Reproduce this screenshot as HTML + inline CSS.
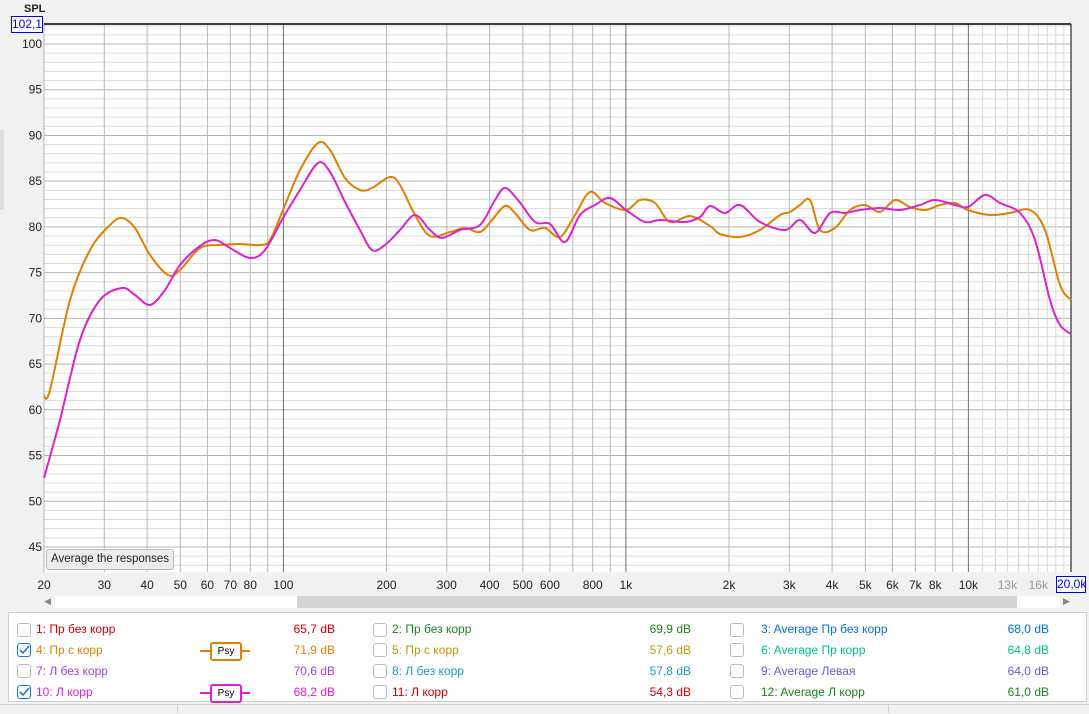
<!DOCTYPE html>
<html><head><meta charset="utf-8"><style>
body{margin:0;width:1089px;height:713px;background:#f2f2f2;font-family:"Liberation Sans",sans-serif;position:relative;overflow:hidden}
.ab{position:absolute;white-space:nowrap}
.leg{position:absolute;left:8px;top:612px;width:1079px;height:90px;background:#fff;border:1px solid #cfcfcf;box-sizing:border-box}
.cb{position:absolute;width:12px;height:12px;border:1px solid #bbb;border-radius:3px;background:#fff}
.cb.on{border-color:#1a73e8}
.t{position:absolute;font-size:12px;white-space:nowrap}
.v{position:absolute;font-size:12px;text-align:right;width:80px}
</style></head><body>
<div class="ab" style="left:24px;top:3px;font-size:11px;font-weight:bold;color:#222;height:9px;overflow:hidden">SPL</div>
<div style="position:absolute;left:0;top:130px;width:4px;height:80px;background:#ddd"></div>
<svg id="g" width="1089" height="612" style="position:absolute;left:0;top:0"></svg>
<div class="ab" style="left:11px;top:16px;width:30px;height:15px;border:1px solid #00f;background:#fff;color:#00f;font-size:12px;text-align:center;line-height:15px">102,1</div>
<div class="ab" style="left:46px;top:549px;height:19px;padding:0 4px;border:1px solid #bbb;border-radius:3px;background:#ececec;font-size:11.5px;line-height:19px;color:#222">Average the responses</div>
<div class="ab" style="left:1056px;top:576px;width:28px;height:15px;border:1px solid #00f;background:#fff;color:#00f;font-size:12px;text-align:center;line-height:15px">20,0k</div>
<div style="position:absolute;left:55px;top:596px;width:1005px;height:12px;background:#fff"></div>
<div style="position:absolute;left:297px;top:596px;width:720px;height:12px;background:#d4d4d4"></div>
<div class="ab" style="left:44px;top:596px;font-size:9px;color:#888">◀</div>
<div class="ab" style="left:1063px;top:596px;font-size:9px;color:#888">▶</div>
<div class="leg">
<div class="cb" style="left:8px;top:10px"></div><div class="t" style="left:27px;top:9px;color:#d00000">1: Пр без корр</div><div class="v" style="left:246px;top:9px;color:#d00000">65,7 dB</div>
<div class="cb on" style="left:8px;top:30px"><svg width="12" height="12" style="position:absolute;left:0;top:0"><path d="M2 6l3 3 6-7" stroke="#1a73e8" stroke-width="1.6" fill="none"/></svg></div><div class="t" style="left:27px;top:30px;color:#e08000">4: Пр с корр</div><div class="v" style="left:246px;top:30px;color:#e08000">71,9 dB</div>
<div class="cb" style="left:8px;top:51px"></div><div class="t" style="left:27px;top:51px;color:#a040e0">7: Л без корр</div><div class="v" style="left:246px;top:51px;color:#a040e0">70,6 dB</div>
<div class="cb on" style="left:8px;top:72px"><svg width="12" height="12" style="position:absolute;left:0;top:0"><path d="M2 6l3 3 6-7" stroke="#1a73e8" stroke-width="1.6" fill="none"/></svg></div><div class="t" style="left:27px;top:72px;color:#e020d0">10: Л корр</div><div class="v" style="left:246px;top:72px;color:#e020d0">68,2 dB</div>
<div style="position:absolute;left:191px;top:37px;width:50px;height:2px;background:#e08000"></div><div class="ab" style="left:201px;top:29px;width:28px;height:15px;border:2px solid #e08000;border-radius:3px;background:#fff;font-size:10px;text-align:center;line-height:15px">Psy</div>
<div style="position:absolute;left:191px;top:79px;width:50px;height:2px;background:#e020d0"></div><div class="ab" style="left:201px;top:71px;width:28px;height:15px;border:2px solid #e020d0;border-radius:3px;background:#fff;font-size:10px;text-align:center;line-height:15px">Psy</div>
<div class="cb" style="left:364px;top:10px"></div><div class="t" style="left:383px;top:9px;color:#208020">2: Пр без корр</div><div class="v" style="left:602px;top:9px;color:#208020">69,9 dB</div>
<div class="cb" style="left:364px;top:30px"></div><div class="t" style="left:383px;top:30px;color:#c09a00">5: Пр с корр</div><div class="v" style="left:602px;top:30px;color:#c09a00">57,6 dB</div>
<div class="cb" style="left:364px;top:51px"></div><div class="t" style="left:383px;top:51px;color:#1a9cc0">8: Л без корр</div><div class="v" style="left:602px;top:51px;color:#1a9cc0">57,8 dB</div>
<div class="cb" style="left:364px;top:72px"></div><div class="t" style="left:383px;top:72px;color:#d00000">11: Л корр</div><div class="v" style="left:602px;top:72px;color:#d00000">54,3 dB</div>
<div class="cb" style="left:721px;top:10px"></div><div class="t" style="left:752px;top:9px;color:#0070e0">3: Average Пр без корр</div><div class="v" style="left:960px;top:9px;color:#0070e0">68,0 dB</div>
<div class="cb" style="left:721px;top:30px"></div><div class="t" style="left:752px;top:30px;color:#00c090">6: Average Пр корр</div><div class="v" style="left:960px;top:30px;color:#00c090">64,8 dB</div>
<div class="cb" style="left:721px;top:51px"></div><div class="t" style="left:752px;top:51px;color:#6060d0">9: Average Левая</div><div class="v" style="left:960px;top:51px;color:#6060d0">64,0 dB</div>
<div class="cb" style="left:721px;top:72px"></div><div class="t" style="left:752px;top:72px;color:#208020">12: Average Л корр</div><div class="v" style="left:960px;top:72px;color:#208020">61,0 dB</div>
</div>
<div style="position:absolute;left:0;top:704px;width:1089px;height:9px;background:#f0f0f0;border-top:1px solid #d0d0d0"></div>
<div style="position:absolute;left:177px;top:704px;width:1px;height:9px;background:#d0d0d0"></div>
<div style="position:absolute;left:888px;top:704px;width:1px;height:9px;background:#d0d0d0"></div>
<script>
var s='',L=44,R=1071,T=24,B=572,D=342.5;
function X(f){return L+Math.log10(f/20)*D}
function Y(d){return 44+(100-d)*9.145}
s+='<rect x="'+L+'" y="'+T+'" width="'+(R-L)+'" height="'+(B-T)+'" fill="#fff"/>';
for(var d=43;d<=102;d++){var y=Y(d);s+='<line x1="'+L+'" x2="'+R+'" y1="'+y+'" y2="'+y+'" stroke="'+(d%5==0?'#b4b4b4':'#dcdcdc')+'" stroke-width="1"/>';}
var fs=[];for(var dec=10;dec<=1000;dec*=10){for(var m=1;m<10;m++){fs.push([dec*m,m==1?2:1])}}
fs.push([10000,2]);for(var k=11000;k<20000;k+=1000)fs.push([k,0]);
fs.forEach(function(a){var f=a[0];if(f<20||f>20000)return;var x=X(f);s+='<line x1="'+x+'" x2="'+x+'" y1="'+T+'" y2="'+B+'" stroke="'+(a[1]==2?'#707070':a[1]==1?'#b8b8b8':'#d8d8d8')+'"/>';});
s+='<line x1="'+L+'" x2="'+R+'" y1="'+T+'" y2="'+T+'" stroke="#000" stroke-width="1.5"/><line x1="'+R+'" x2="'+R+'" y1="'+T+'" y2="'+B+'" stroke="#000"/>';
for(var d=45;d<=100;d+=5)s+='<text x="42" y="'+(Y(d)+4)+'" font-size="12" text-anchor="end" fill="#222">'+d+'</text>';
[[20,'20'],[30,'30'],[40,'40'],[50,'50'],[60,'60'],[70,'70'],[80,'80'],[100,'100'],[200,'200'],[300,'300'],[400,'400'],[500,'500'],[600,'600'],[800,'800'],[1000,'1k'],[2000,'2k'],[3000,'3k'],[4000,'4k'],[5000,'5k'],[6000,'6k'],[7000,'7k'],[8000,'8k'],[10000,'10k'],[13000,'13k'],[16000,'16k']].forEach(function(a){s+='<text x="'+X(a[0])+'" y="589" font-size="12" text-anchor="middle" fill="'+(a[0]>10000?'#999':'#222')+'">'+a[1]+'</text>'});
function path(p,c){var d='M'+p[0][0]+' '+p[0][1];for(var i=0;i<p.length-1;i++){var p0=p[Math.max(i-1,0)],p1=p[i],p2=p[i+1],p3=p[Math.min(i+2,p.length-1)];d+=' C'+(p1[0]+(p2[0]-p0[0])/6)+' '+(p1[1]+(p2[1]-p0[1])/6)+' '+(p2[0]-(p3[0]-p1[0])/6)+' '+(p2[1]-(p3[1]-p1[1])/6)+' '+p2[0]+' '+p2[1];}return '<path d="'+d+'" fill="none" stroke="'+c+'" stroke-width="2"/>'}
var o=[[44,396],[50,390],[70,300],[90,250],[110,225],[122,218],[135,228],[150,255],[168,275],[180,270],[200,248],[220,245],[240,244],[260,245],[270,240],[283,210],[300,170],[318,143],[330,150],[345,178],[360,190],[372,188],[390,177],[400,185],[415,215],[430,236],[450,232],[465,228],[480,232],[492,220],[505,206],[515,213],[530,230],[545,228],[560,237],[575,215],[590,192],[605,203],[626,210],[640,200],[655,203],[670,222],[690,216],[710,226],[720,234],[740,237],[760,230],[780,215],[790,212],[800,205],[810,200],[820,230],[835,228],[850,210],[865,205],[880,212],[895,200],[910,207],[925,210],[940,205],[955,203],[968,210],[990,215],[1010,213],[1030,210],[1045,230],[1060,285],[1071,300]];
var m=[[44,478],[60,420],[80,340],[100,300],[122,288],[135,295],[150,305],[165,290],[180,265],[200,246],[215,240],[230,248],[250,258],[265,250],[283,218],[300,190],[318,163],[330,172],[345,202],[360,230],[372,250],[385,245],[400,230],[415,215],[430,230],[442,238],[460,230],[480,225],[495,200],[505,188],[518,200],[535,222],[550,224],[565,242],[580,215],[595,205],[610,198],[626,210],[645,222],[660,220],[685,222],[700,217],[710,206],[725,213],[740,205],[760,222],[785,230],[800,220],[815,233],[830,213],[845,213],[860,210],[880,208],[900,210],[920,205],[935,200],[955,205],[968,207],[985,195],[1000,203],[1020,213],[1035,240],[1050,300],[1060,325],[1071,334]];
s+=path(o,'#e08000')+path(m,'#dd22cc');
document.getElementById('g').innerHTML=s;
</script>
</body></html>
